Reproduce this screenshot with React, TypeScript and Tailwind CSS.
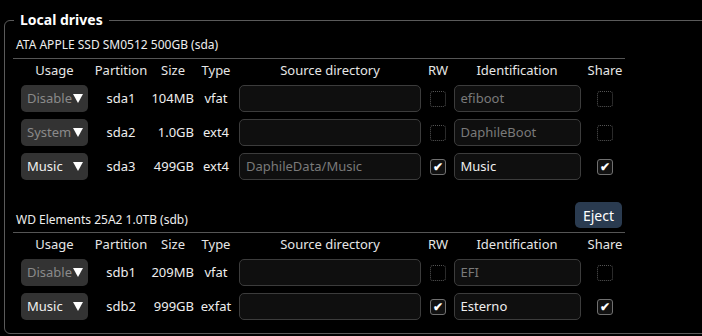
import React from "react";

type Part = {
  usage: string;
  usageOn: boolean;
  name: string;
  size: string;
  type: string;
  source: string;
  rw: boolean;
  ident: string;
  on: boolean;
};

const drives: { title: string; eject?: boolean; parts: Part[] }[] = [
  {
    title: "ATA APPLE SSD SM0512 500GB (sda)",
    parts: [
      { usage: "Disable", usageOn: false, name: "sda1", size: "104MB", type: "vfat", source: "", rw: false, ident: "efiboot", on: false },
      { usage: "System", usageOn: false, name: "sda2", size: "1.0GB", type: "ext4", source: "", rw: false, ident: "DaphileBoot", on: false },
      { usage: "Music", usageOn: true, name: "sda3", size: "499GB", type: "ext4", source: "DaphileData/Music", rw: true, ident: "Music", on: true },
    ],
  },
  {
    title: "WD Elements 25A2 1.0TB (sdb)",
    eject: true,
    parts: [
      { usage: "Disable", usageOn: false, name: "sdb1", size: "209MB", type: "vfat", source: "", rw: false, ident: "EFI", on: false },
      { usage: "Music", usageOn: true, name: "sdb2", size: "999GB", type: "exfat", source: "", rw: true, ident: "Esterno", on: true },
    ],
  },
];

const cols = "grid grid-cols-[83px_50px_54px_32px_196px_20px_138px_38px] items-center justify-items-center";

function Check({ on }: { on: boolean }) {
  if (!on)
    return <div className="h-[16px] w-[16px] rounded-[3px] border border-dotted border-[#555]" />;
  return (
    <div className="flex h-[16px] w-[16px] items-center justify-center rounded-[3px] border border-[#707070] bg-[#111] text-[12px] font-bold leading-none text-white">
      ✔
    </div>
  );
}

function Field({ text, w, on }: { text: string; w: string; on: boolean }) {
  return (
    <div
      className={`flex h-[27px] items-center rounded-[5px] border-[1.5px] border-[#3c3c3c] bg-[#0f0f0f] px-[6px] text-[13px] ${w} ${
        on ? "text-[#eeeeee]" : "text-[#7a7a7a]"
      }`}
    >
      {text}
    </div>
  );
}

function Table({ parts }: { parts: Part[] }) {
  return (
    <div>
      <div className={`${cols} mt-[2px] h-[20px] text-[13px] text-[#e6e6e6]`}>
        <span>Usage</span>
        <span>Partition</span>
        <span>Size</span>
        <span>Type</span>
        <span>Source directory</span>
        <span>RW</span>
        <span>Identification</span>
        <span>Share</span>
      </div>
      <div className="mt-[4px] flex flex-col gap-[7px]">
        {parts.map((p) => (
          <div key={p.name} className={`${cols} h-[27px] text-[13px] text-[#eeeeee]`}>
            <div className="flex h-[27px] w-[67px] items-center justify-between rounded-[5px] bg-[#333333] pl-[6px] pr-[5px]">
              <span className={p.usageOn ? "text-[#f0f0f0]" : "text-[#8a8a8a]"}>{p.usage}</span>
              <svg width="10" height="9" viewBox="0 0 10 9">
                <polygon points="0,0 10,0 5,9" fill="#fff" />
              </svg>
            </div>
            <span>{p.name}</span>
            <span className="justify-self-end pr-[6px]">{p.size}</span>
            <span>{p.type}</span>
            <Field text={p.source} w="w-[182px]" on={false} />
            <Check on={p.rw} />
            <Field text={p.ident} w="w-[127px]" on={p.on} />
            <Check on={p.on} />
          </div>
        ))}
      </div>
    </div>
  );
}

export default function App() {
  return (
    <div className="h-[336px] w-[702px] overflow-hidden bg-black pt-[10px] font-['Noto_Sans',sans-serif] text-[#eeeeee]">
      <fieldset className="ml-[4px] h-[324px] w-[740px] rounded-[6px] border border-[#5a5a5a] pl-[8px]">
        <legend className="ml-[1px] px-[6px] text-[14px] font-bold leading-[20px] text-white">Local drives</legend>
        <div className="w-[612px]">
          <div className="mt-[5px] border-b border-[#555] pb-[3px] pl-[3px] text-[12px] leading-[20px]">
            {drives[0].title}
          </div>
          <Table parts={drives[0].parts} />
          <div className="mt-[22px] flex items-end justify-between border-b border-[#555] pb-[2px] pl-[3px]">
            <span className="text-[12px] leading-[20px]">{drives[1].title}</span>
            <button className="mb-[2px] mr-[3px] h-[26px] rounded-[5px] bg-[#2a3b50] px-[8px] text-[14px] text-white">
              Eject
            </button>
          </div>
          <Table parts={drives[1].parts} />
        </div>
      </fieldset>
    </div>
  );
}
